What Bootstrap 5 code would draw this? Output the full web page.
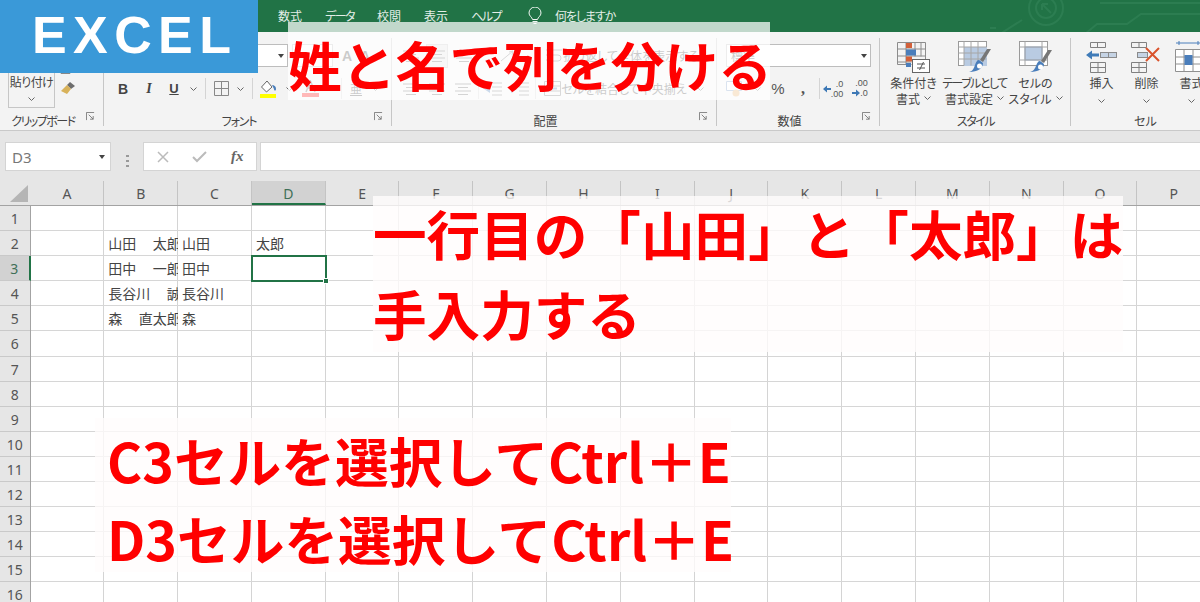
<!DOCTYPE html>
<html lang="ja">
<head>
<meta charset="utf-8">
<title>EXCEL 姓と名で列を分ける</title>
<link href="https://cdn.jsdelivr.net/npm/bootstrap@5.3.0/dist/css/bootstrap.min.css" rel="stylesheet">
<style>
html,body{margin:0;height:602px;overflow:hidden;background:#fff}
body{font-family:"Noto Sans CJK JP","Noto Sans",sans-serif;color:#444;font-size:12px;font-feature-settings:"palt"}
svg{display:block;flex-shrink:0}
.app{width:1200px;height:602px}
.tight1{letter-spacing:-.6px}.tight2{letter-spacing:-1.1px}.tight3{letter-spacing:-1.5px}
/* title bar */
.titlebar{height:32px;background:#217346;color:#e3eee8;padding-left:278px;gap:23px;line-height:32px}
.bulb{margin-left:4px;margin-right:-10px}
.circuit{margin-left:auto}
/* ribbon */
.ribbon{height:99px;background:#f3f3f3;border-bottom:1px solid #c9c9c9}
.rg{height:98px;flex:none}
.rg:not(:last-child)::after{content:"";position:absolute;right:0;top:6px;bottom:4px;width:1px;background:#c6c6c6}
.g-clip{width:104px}.g-font{width:288px}.g-align{width:325px}.g-num{width:163px}.g-style{width:191px}.g-cell{width:129px}
.rg-body{height:80px}
.rg-label{height:18px;line-height:18px;color:#444}
.label-cell{padding-left:20px}
.launch{width:18px}
.rows{padding-top:12px;row-gap:10px}
.tr{display:grid;height:23px;align-items:center;justify-items:center}
.tr-font1{grid-template-columns:14px 170px 4px 41px 5px 18px 18px}
.tr-font2{grid-template-columns:26px 26px 24px 14px 10px 22px 16px 8px 24px 18px 24px 10px 18px 12px 26px;padding-left:6px}
.tr-align1{grid-template-columns:26px 26px 28px 4px 54px 2px 5px 22px 132px;padding-left:6px}
.tr-align2{grid-template-columns:26px 26px 26px 4px 26px 28px 2px 5px 22px 122px 7px 16px;padding-left:6px}
.tr-num2{grid-template-columns:24px 22px 20px 30px 2px 26px 28px;padding-left:5px}
.vsep{width:1px;height:21px;background:#d4d4d4}
.box{height:23px;background:#fff;border:1px solid #bdbdbd;padding:0 3px 0 4px;width:100%}
.num-box{width:145px;margin:12px 0 10px 9px}
.caret{width:0;height:0;border:3px solid transparent;border-top:4px solid #444;border-bottom:0}
.chev{width:7px;height:4px}
.hot{width:22px;height:24px;background:#e2e2e2;border:1px solid #c6c6c6}
.bt{font:700 14px "Liberation Sans",sans-serif}
.it{font:italic 700 14px "Liberation Serif",serif}
.un{font:700 13px "Liberation Sans",sans-serif;text-decoration:underline}
.tiny{font-size:9px;line-height:10px;color:#555;text-align:right;font-family:"Liberation Sans",sans-serif}
.pct{font:15px "Liberation Sans",sans-serif;color:#555}
.comma{font:700 16px/10px "Liberation Serif",serif;color:#555}
.lbl{font-size:12px;white-space:nowrap}
.paste{width:47px;height:70px;margin:6px 0 0 8px;border:1px solid #c6c6c6;border-top:0;padding-bottom:2px;line-height:15px;justify-content:flex-end}
.clip-side{padding:33px 0 0 5px;row-gap:7px;width:22px}
.big{width:61px;flex:none;padding-top:9px;line-height:15.5px;text-align:center;white-space:nowrap}
.big-first{margin-left:3px}
.big svg.lg{margin-bottom:2px}
.cellbtn{width:45px;flex:none;padding-top:9px;line-height:15.5px}
.cellbtn svg.lg{margin-bottom:2px}
.cell-first{margin-left:8px}
/* formula bar */
.fbar{height:50px;background:#e6e6e6;padding:11px 0 0 5px}
.fbar .fb{height:29px;background:#fff;border:1px solid #d4d4d4}
.namebox{width:106px;padding:0 5px 0 6px;font:15px "Noto Sans",sans-serif;color:#777}
.dots{width:32px}
.fx-box{width:114px;margin-right:3px}
.fx-box>*{width:37.6px}
.fx{font:italic 700 15px "Liberation Serif",serif;color:#666;text-align:center}
.input{flex:1;border-right:0!important}
/* sheet */
.colhead{height:25px;background:#e6e6e6;border-bottom:1px solid #a3a3a3;font:14px/25px "Noto Sans",sans-serif;color:#555}
.corner{width:30.5px;flex:none}
.ch{width:73.8px;flex:none;text-align:center;border-right:1px solid #c4c4c4}
.ch.on{background:#d2d2d2;border-bottom:2px solid #217346;color:#3f6f57}
.rowhead{width:30.5px;background:#e6e6e6;border-right:1px solid #a3a3a3;font:14px/25.1px "Noto Sans",sans-serif;color:#555;flex-shrink:0}
.rh{height:25.1px;text-align:center;border-bottom:1px solid #c9c9c9}
.rh.on{background:#d2d2d2;border-right:2px solid #217346;color:#3f6f57;margin-right:-1px}
.cells{display:grid;flex:1}
.cells>*{grid-area:1/1}
.cv{width:73.8px;flex:none;height:402px;border-right:1px solid #d4d4d4}
.rl{height:25.1px;flex:none;border-bottom:1px solid #d6d6d6}
.content{display:grid;grid-template-columns:repeat(16,73.8px);grid-template-rows:repeat(16,25.1px)}
.c{font-size:14px;line-height:25px;padding-left:4px;overflow:hidden;white-space:nowrap;color:#444;font-feature-settings:normal}
.gp{display:inline-block;width:2.5px}
.cb{grid-column:2}.cc{grid-column:3}.cd{grid-column:4}
.r2{grid-row:2}.r3{grid-row:3}.r4{grid-row:4}.r5{grid-row:5}
.sel{border:2px solid #217346;margin:-1px -1px -1px -1px;z-index:1}
.handle{position:absolute;right:-4px;bottom:-4px;width:6px;height:6px;background:#217346;border:1px solid #fff}
/* overlays */
.badge-x{left:0;top:0;width:258px;height:73px;background:#3a99d8;color:#fff;font:700 52px/71px "Liberation Sans",sans-serif;letter-spacing:6.4px;padding-left:32px;z-index:5}
.note{color:#f00;font-weight:700;white-space:nowrap;font-feature-settings:normal;z-index:4}
.n-title{left:288px;top:22px;width:482px;height:78px;background:rgba(255,255,255,.72);font-size:53.8px;line-height:53px;padding-top:15px}
.n-hand{left:373px;top:196px;width:750px;height:156px;background:rgba(255,253,252,.78);font-size:53.6px;line-height:70px;padding-top:2px;row-gap:10px}
.n-steps{left:95px;top:418px;width:636px;height:154px;background:rgba(255,253,252,.78);font-size:53.7px;line-height:78px;padding:3px 0 0 12px}
</style>
</head>
<body>
<svg width="0" height="0" class="position-absolute">
<defs>
<symbol id="chev" viewBox="0 0 7 4"><path d="M.5.5 3.5 3.5 6.5.5" fill="none" stroke="#666"/></symbol>
<symbol id="launch" viewBox="0 0 10 10"><path d="M.5 9V.5H9M3 3l5 5M8 4.5V8H4.5" fill="none" stroke="#777"/></symbol>
<symbol id="lines" viewBox="0 0 16 12"><path d="M0 1h16M3 4.500h10M0 8h16M3 11.500h10" stroke="#666"/></symbol>
<symbol id="cf" viewBox="0 0 34 32"><path d="M.5 1.500h28v24M.5 1.500v22h14M.5 8h28M.5 15h28M.5 21h14M9 1.500v22M18 1.500v14M24 1.500v14" fill="none" stroke="#8c8c8c"/><rect x="9" y="2" width="6" height="5" fill="#d2603a"/><rect x="9" y="8.500" width="10" height="6" fill="#4a7ebb"/><rect x="9" y="15.500" width="6" height="5" fill="#d2603a"/><rect x="9" y="22" width="5" height="4" fill="#4a7ebb"/><rect x="15.500" y="18.500" width="17" height="13" fill="#fff" stroke="#666"/><path d="M20 23h8M20 27h8M26.500 21l-4 8" stroke="#555" fill="none"/></symbol>
<symbol id="tbl" viewBox="0 0 34 32"><rect x=".5" y=".5" width="28" height="24" fill="#fff" stroke="#9a9a9a"/><rect x="6" y="6" width="23" height="19" fill="#b9cbe2"/><path d="M.5 6h28M.5 12h28M.5 18h28M6 .5v24M13 .5v24M20 .5v24" stroke="#a6a6a6" fill="none"/><path d="M33 8l-8 13-3-2 7-11z" fill="#777"/><path d="M21 19l4 3c0 5-5 9-14 9 4-1 5-4 6-7 1-3 2-5 4-5z" fill="#4a7ebb"/><circle cx="21.500" cy="25" r="2.500" fill="#fff"/></symbol>
<symbol id="sty" viewBox="0 0 34 32"><rect x=".5" y=".5" width="28" height="24" fill="#fff" stroke="#9a9a9a"/><rect x="6" y="6" width="17" height="13" fill="#b9cbe2" stroke="#8fa8c9"/><path d="M.5 6h28M.5 19h28M6 .5v24M23 .5v24" stroke="#a6a6a6" fill="none"/><path d="M33 9l-8 13-3-2 7-11z" fill="#777"/><path d="M21 20l4 3c0 4-5 8-14 8 4-1 5-4 6-6 1-3 2-5 4-5z" fill="#4a7ebb"/><circle cx="21.500" cy="26" r="2.500" fill="#fff"/></symbol>
<symbol id="ins" viewBox="0 0 34 32"><path d="M5.500 1.500h15v5h-15zM12.500 1.500v5M5.500 21.500h15v10h-15zM5.500 26.500h15M13 21.500v10" fill="none" stroke="#808080"/><rect x="15.500" y="11.500" width="16" height="5" fill="#c5d3e4" stroke="#8a8a8a"/><path d="M23.500 11.500v5" stroke="#8a8a8a"/><path d="M1 14 7 9.500v3h7v3H7v3z" fill="#3f7bb8"/></symbol>
<symbol id="del" viewBox="0 0 34 32"><path d="M1.500 1.500h15v5h-15zM9 1.500v5M1.500 21.500h15v10h-15zM1.500 26.500h15M9 21.500v10" fill="none" stroke="#808080"/><rect x="7.500" y="11.500" width="10" height="5" fill="#c5d3e4" stroke="#8a8a8a"/><path d="M16 7 29 20M29 7 16 20" stroke="#d9532c" stroke-width="2"/></symbol>
<symbol id="fmt" viewBox="0 0 34 32"><path d="M1 2h25M4 0v4M23 0v4" stroke="#4a7ebb" fill="none"/><path d="M.5 8.500h26v22h-26zM.5 16h26M.5 23h26M9 8.500v22M18 8.500v22" fill="#fff" stroke="#909090"/><rect x="9.500" y="14" width="8" height="10" fill="#4a7ebb"/></symbol>
</defs>
</svg>

<div class="app position-relative overflow-hidden">
  <header class="titlebar d-flex">
    <span>数式</span><span class="tight3">データ</span><span>校閲</span><span>表示</span><span class="tight3">ヘルプ</span>
    <span class="bulb d-flex align-items-center"><svg width="14" height="18" viewBox="0 0 14 18"><path d="M4.500 12.500C4 10 1 9 1 6a6 6 0 0 1 12 0c0 3-3 4-3.500 6.500z" fill="none" stroke="#f1f7f3"/><path d="M4.500 14.500h5M5.500 16.500h3" stroke="#f1f7f3"/></svg></span>
    <span class="tight2">何をしますか</span>
    <svg class="circuit" width="300" height="32" viewBox="0 0 300 32"><g fill="none" stroke="#2c7d51" stroke-width="2"><circle cx="146" cy="8" r="17"/><circle cx="146" cy="8" r="10"/><path d="M142 4l9 9M142 4v6M142 4h6M100 34l22-14M200 3h100M185 34l12-10h30l14-10h59M96 28h-6"/></g></svg>
  </header>

  <section class="ribbon d-flex">
    <div class="rg g-clip position-relative d-flex flex-column">
      <div class="rg-body d-flex">
        <div class="paste d-flex flex-column align-items-center">
          <span class="lbl tight1">貼り付け</span>
          <svg class="chev mt-2 mb-1"><use href="#chev"/></svg>
        </div>
        <div class="clip-side d-flex flex-column">
          <svg width="14" height="9" viewBox="0 0 14 9"><path d="M1 .5h9v8H1z" fill="#fff" stroke="#888"/><path d="M3 4h5M3 6h5" stroke="#888"/></svg>
          <svg width="16" height="14" viewBox="0 0 16 14"><path d="M10 1l5 4-4 3-4-4z" fill="#6d6d6d"/><path d="M7 4l4 4-4 5L1 10z" fill="#d8b25a"/></svg>
        </div>
      </div>
      <div class="rg-label d-flex"><span class="flex-grow-1 text-center tight3">クリップボード</span><span class="launch"><svg width="9" height="9"><use href="#launch"/></svg></span></div>
    </div>

    <div class="rg g-font position-relative d-flex flex-column">
      <div class="rg-body rows d-flex flex-column">
        <div class="tr tr-font1">
          <span></span>
          <span class="box d-flex align-items-center justify-content-end"><i class="caret"></i></span>
          <span></span>
          <span class="box d-flex align-items-center justify-content-end"><i class="caret"></i></span>
          <span></span>
          <span class="bt">A</span><span class="bt">A</span>
        </div>
        <div class="tr tr-font2">
          <span class="bt">B</span><span class="it">I</span><span class="un">U</span><svg class="chev"><use href="#chev"/></svg><i class="vsep"></i>
          <svg width="15" height="15" viewBox="0 0 15 15"><path d="M.5.500h14v14H.5zM7.500.5v14M.5 7.500h14" fill="none" stroke="#888"/></svg><svg class="chev"><use href="#chev"/></svg><i class="vsep"></i>
          <svg width="17" height="18" viewBox="0 0 17 18"><path d="M7 1 1.500 7l5 5L12 7z" fill="#fff" stroke="#666"/><path d="M12 5c2 0 4 1 4 4 0 2-2 2-2 0" fill="#4a7ebb"/><rect y="14" width="16" height="4" fill="#ff0"/></svg><svg class="chev"><use href="#chev"/></svg>
          <svg width="17" height="17" viewBox="0 0 17 17"><path d="M4 12 8.500 1 13 12M6 8h5" fill="none" stroke="#666" stroke-width="1.500"/><rect y="13" width="17" height="4" fill="#f00"/></svg><svg class="chev"><use href="#chev"/></svg><i class="vsep"></i>
          <span class="text-center lh-1"><u>亜</u></span><svg class="chev"><use href="#chev"/></svg>
        </div>
      </div>
      <div class="rg-label d-flex"><span class="flex-grow-1 text-center tight2">フォント</span><span class="launch"><svg width="9" height="9"><use href="#launch"/></svg></span></div>
    </div>

    <div class="rg g-align position-relative d-flex flex-column">
      <div class="rg-body rows d-flex flex-column">
        <div class="tr tr-align1">
          <svg width="16" height="12"><use href="#lines"/></svg>
          <span class="hot d-flex align-items-center justify-content-center"><svg width="16" height="12"><use href="#lines"/></svg></span>
          <svg width="16" height="12"><use href="#lines"/></svg>
          <span></span>
          <svg width="18" height="16" viewBox="0 0 18 16"><path d="M1 13 13 3M13 3l-4 1M13 3l-1 4" fill="none" stroke="#777"/></svg>
          <i class="vsep"></i><span></span>
          <svg width="16" height="14" viewBox="0 0 16 14"><path d="M0 1h16M0 6h12a3 3 0 0 1 0 6H7M0 11h4" fill="none" stroke="#777"/></svg>
          <span class="lbl justify-self-start">折り返して全体を表示する</span>
        </div>
        <div class="tr tr-align2">
          <svg width="16" height="12"><use href="#lines"/></svg><svg width="16" height="12"><use href="#lines"/></svg><svg width="16" height="12"><use href="#lines"/></svg>
          <i class="vsep"></i>
          <svg width="18" height="14" viewBox="0 0 18 14"><path d="M8 1h10M8 5h10M8 9h10M8 13h10" stroke="#777"/><path d="M0 7l6-4v8z" fill="#4a7ebb"/></svg>
          <svg width="18" height="14" viewBox="0 0 18 14"><path d="M8 1h10M8 5h10M8 9h10M8 13h10" stroke="#777"/><path d="M6 7 0 3v8z" fill="#4a7ebb"/></svg>
          <i class="vsep"></i><span></span>
          <svg width="17" height="15" viewBox="0 0 17 15"><path d="M.5.500h16v14H.5zM.5 5h16M.5 10h16" fill="none" stroke="#777"/><path d="M4 7.500h9" stroke="#4a7ebb" stroke-width="2"/></svg>
          <span class="lbl justify-self-start">セルを結合して中央揃え</span><span></span>
          <svg class="chev"><use href="#chev"/></svg>
        </div>
      </div>
      <div class="rg-label d-flex"><span class="flex-grow-1 text-center">配置</span><span class="launch"><svg width="9" height="9"><use href="#launch"/></svg></span></div>
    </div>

    <div class="rg g-num position-relative d-flex flex-column">
      <div class="rg-body d-flex flex-column">
        <div class="box num-box d-flex align-items-center justify-content-between"><span>標準</span><i class="caret"></i></div>
        <div class="tr tr-num2">
          <svg width="17" height="17" viewBox="0 0 17 17"><path d="M.5 1.500h15v9H.5z" fill="#fff" stroke="#7a9cc6"/><circle cx="10" cy="13" r="3.500" fill="#e8b06a"/></svg>
          <svg class="chev"><use href="#chev"/></svg>
          <span class="pct">%</span><span class="comma">,</span><i class="vsep"></i>
          <span class="d-flex align-items-center tiny"><svg width="8" height="8" viewBox="0 0 8 8"><path d="M0 4l4-3.500V3h4v2H4v2.500z" fill="#3d78b5"/></svg><span>.0<br>.00</span></span>
          <span class="d-flex align-items-center tiny"><span>.00<br><span class="d-inline-flex align-items-center"><svg width="8" height="8" viewBox="0 0 8 8"><path d="M8 4 4 .5V3H0v2h4v2.500z" fill="#3d78b5"/></svg>.0</span></span></span>
        </div>
      </div>
      <div class="rg-label d-flex"><span class="flex-grow-1 text-center">数値</span><span class="launch"><svg width="9" height="9"><use href="#launch"/></svg></span></div>
    </div>

    <div class="rg g-style position-relative d-flex flex-column">
      <div class="rg-body d-flex">
        <div class="big big-first d-flex flex-column align-items-center"><svg class="lg" width="34" height="32"><use href="#cf"/></svg><span>条件付き</span><span class="d-flex align-items-center gap-1">書式 <svg class="chev"><use href="#chev"/></svg></span></div>
        <div class="big d-flex flex-column align-items-center"><svg class="lg" width="34" height="32"><use href="#tbl"/></svg><span class="tight3">テーブルとして</span><span class="d-flex align-items-center gap-1">書式設定 <svg class="chev"><use href="#chev"/></svg></span></div>
        <div class="big d-flex flex-column align-items-center"><svg class="lg" width="34" height="32"><use href="#sty"/></svg><span>セルの</span><span class="d-flex align-items-center gap-1">スタイル <svg class="chev"><use href="#chev"/></svg></span></div>
      </div>
      <div class="rg-label text-center tight3">スタイル</div>
    </div>

    <div class="rg g-cell position-relative d-flex flex-column">
      <div class="rg-body d-flex">
        <div class="cellbtn cell-first d-flex flex-column align-items-center"><svg class="lg" width="34" height="32"><use href="#ins"/></svg><span>挿入</span><svg class="chev mt-2"><use href="#chev"/></svg></div>
        <div class="cellbtn d-flex flex-column align-items-center"><svg class="lg" width="34" height="32"><use href="#del"/></svg><span>削除</span><svg class="chev mt-2"><use href="#chev"/></svg></div>
        <div class="cellbtn d-flex flex-column align-items-center"><svg class="lg" width="34" height="32"><use href="#fmt"/></svg><span>書式</span><svg class="chev mt-2"><use href="#chev"/></svg></div>
      </div>
      <div class="rg-label text-center label-cell">セル</div>
    </div>
  </section>

  <section class="fbar d-flex">
    <div class="fb namebox d-flex align-items-center justify-content-between"><span>D3</span><i class="caret"></i></div>
    <div class="dots d-flex align-items-center justify-content-center"><svg width="3" height="13" viewBox="0 0 3 13"><path d="M0 0h3v2H0zM0 5h3v2H0zM0 10h3v2H0z" fill="#999"/></svg></div>
    <div class="fb fx-box d-flex align-items-center">
      <span class="d-flex justify-content-center"><svg width="12" height="12" viewBox="0 0 12 12"><path d="M1 1l10 10M11 1 1 11" stroke="#bbb" stroke-width="1.500"/></svg></span>
      <span class="d-flex justify-content-center"><svg width="15" height="12" viewBox="0 0 15 12"><path d="M1 6l4 4 9-9" fill="none" stroke="#bbb" stroke-width="2"/></svg></span>
      <span class="fx">fx</span>
    </div>
    <div class="fb input"></div>
  </section>

  <div class="colhead d-flex">
    <div class="corner"><svg width="30" height="25" viewBox="0 0 30 25"><path d="M28 4v17H10z" fill="#b5b5b5"/></svg></div>
    <div class="ch">A</div><div class="ch">B</div><div class="ch">C</div><div class="ch on">D</div><div class="ch">E</div><div class="ch">F</div><div class="ch">G</div><div class="ch">H</div><div class="ch">I</div><div class="ch">J</div><div class="ch">K</div><div class="ch">L</div><div class="ch">M</div><div class="ch">N</div><div class="ch">O</div><div class="ch">P</div>
  </div>
  <div class="d-flex">
    <div class="rowhead">
      <div class="rh">1</div><div class="rh">2</div><div class="rh on">3</div><div class="rh">4</div><div class="rh">5</div><div class="rh">6</div><div class="rh">7</div><div class="rh">8</div><div class="rh">9</div><div class="rh">10</div><div class="rh">11</div><div class="rh">12</div><div class="rh">13</div><div class="rh">14</div><div class="rh">15</div><div class="rh">16</div>
    </div>
    <div class="cells">
      <div class="d-flex"><i class="cv"></i><i class="cv"></i><i class="cv"></i><i class="cv"></i><i class="cv"></i><i class="cv"></i><i class="cv"></i><i class="cv"></i><i class="cv"></i><i class="cv"></i><i class="cv"></i><i class="cv"></i><i class="cv"></i><i class="cv"></i><i class="cv"></i><i class="cv"></i></div>
      <div class="d-flex flex-column"><i class="rl"></i><i class="rl"></i><i class="rl"></i><i class="rl"></i><i class="rl"></i><i class="rl"></i><i class="rl"></i><i class="rl"></i><i class="rl"></i><i class="rl"></i><i class="rl"></i><i class="rl"></i><i class="rl"></i><i class="rl"></i><i class="rl"></i><i class="rl"></i></div>
      <div class="content">
        <div class="c cb r2">山田　<i class="gp"></i>太郎</div><div class="c cc r2">山田</div><div class="c cd r2">太郎</div>
        <div class="c cb r3">田中　<i class="gp"></i>一郎</div><div class="c cc r3">田中</div><div class="cd r3 sel position-relative"><i class="handle"></i></div>
        <div class="c cb r4">長谷川　<i class="gp"></i>誠</div><div class="c cc r4">長谷川</div>
        <div class="c cb r5">森　<i class="gp"></i>直太郎</div><div class="c cc r5">森</div>
      </div>
    </div>
  </div>

  <div class="badge-x position-absolute">EXCEL</div>
  <div class="note n-title position-absolute">姓と名で列を分ける</div>
  <div class="note n-hand position-absolute d-flex flex-column"><div>一行目の「山田」と「太郎」は</div><div>手入力する</div></div>
  <div class="note n-steps position-absolute"><div>C3セルを選択してCtrl＋E</div><div>D3セルを選択してCtrl＋E</div></div>
</div>
<script src="https://cdn.jsdelivr.net/npm/bootstrap@5.3.0/dist/js/bootstrap.bundle.min.js"></script>
</body>
</html>
